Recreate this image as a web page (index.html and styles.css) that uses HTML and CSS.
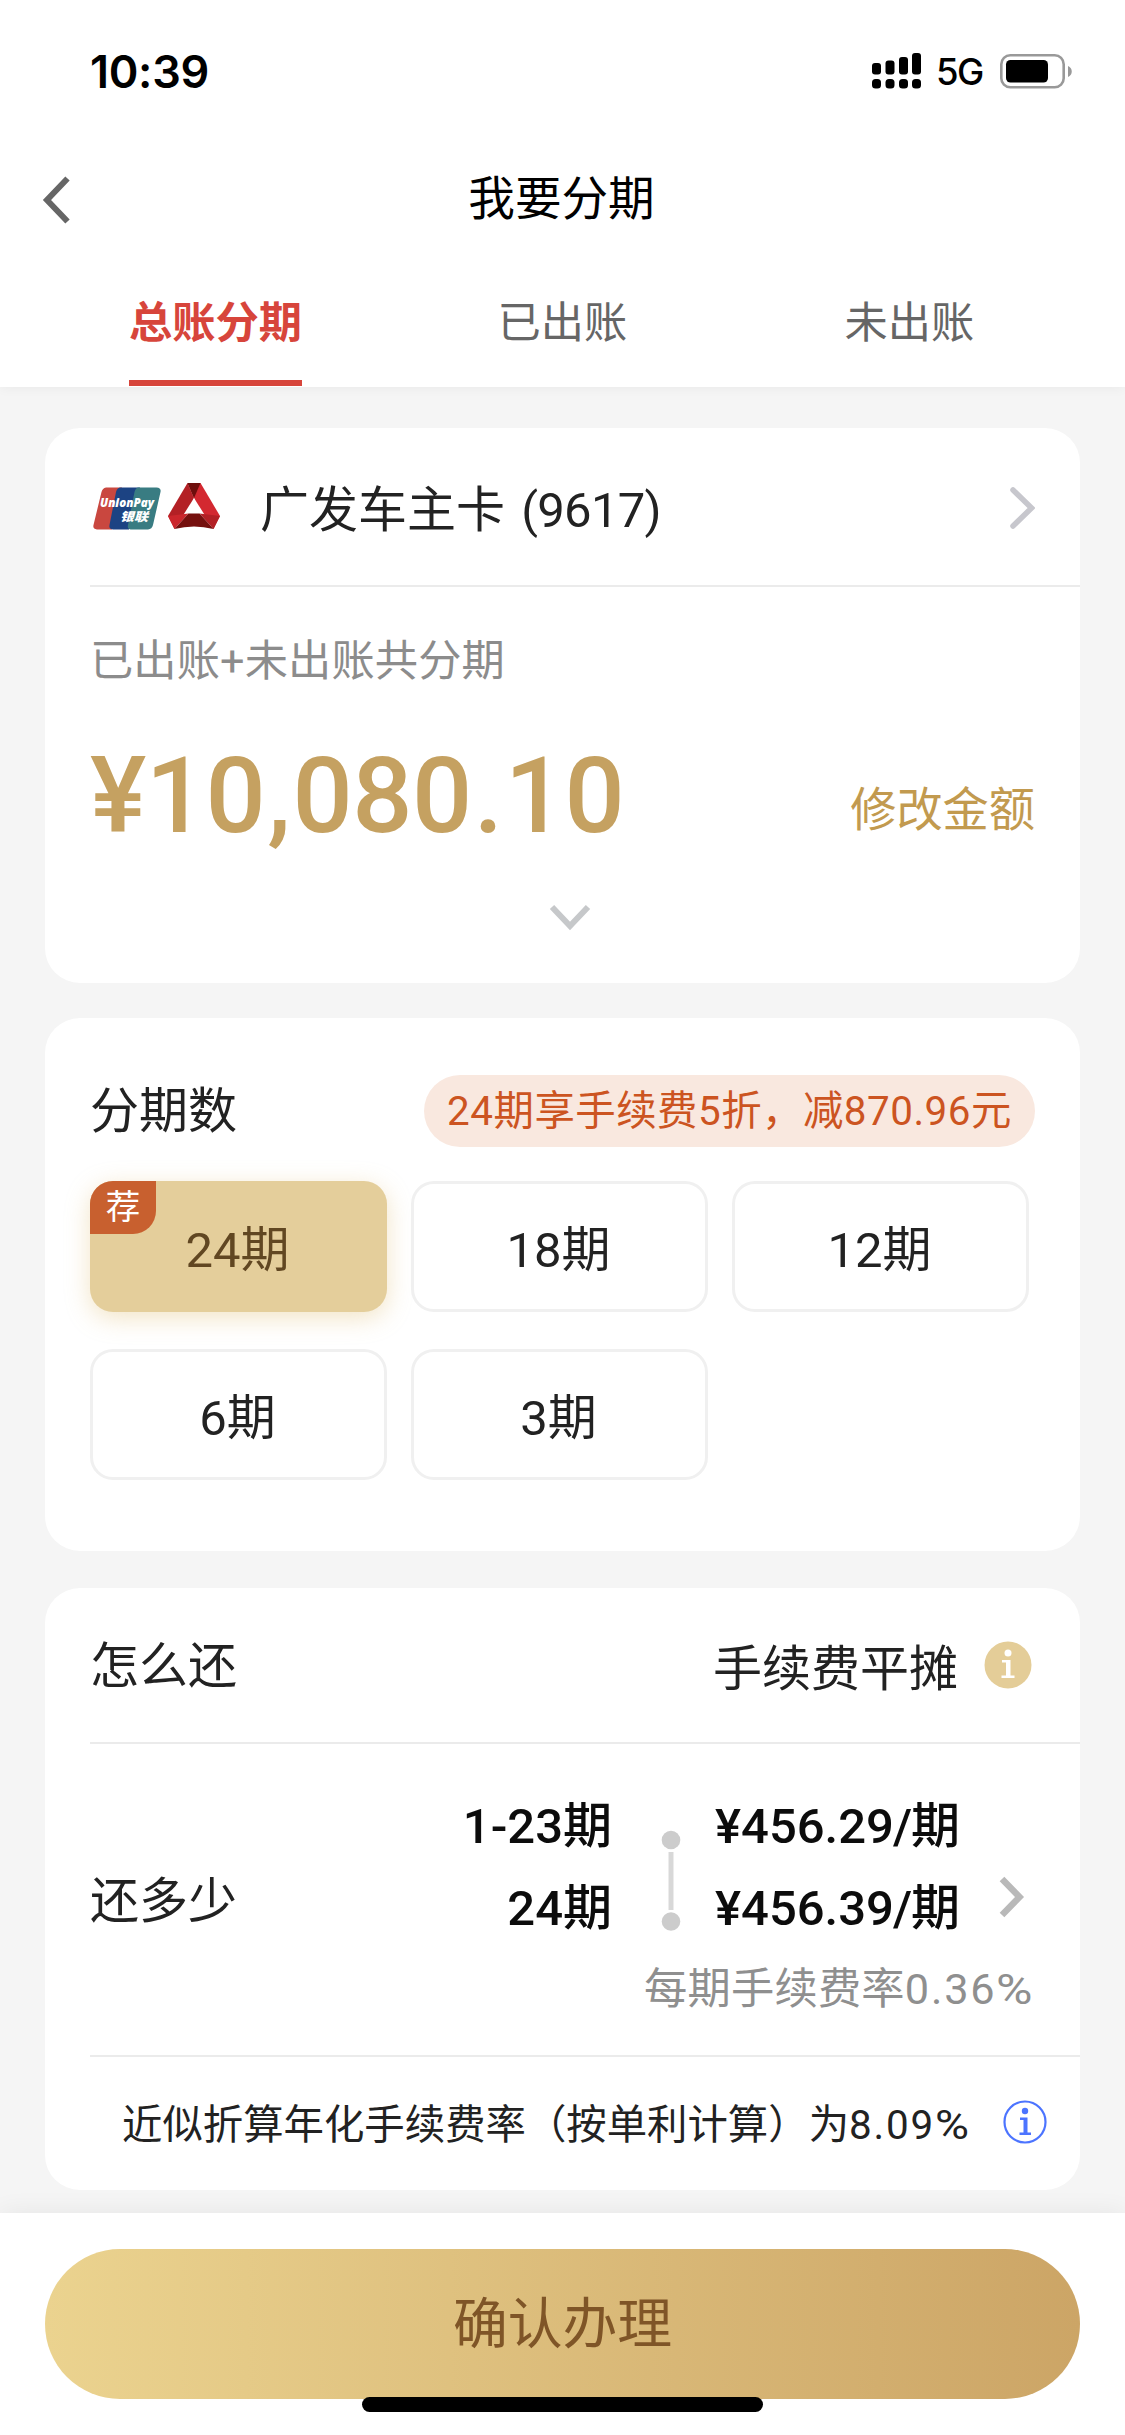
FILE: index.html
```html
<!DOCTYPE html>
<html lang="zh-CN">
<head>
<meta charset="utf-8">
<title>我要分期</title>
<link rel="stylesheet" href="styles.css">
</head>
<body>
<div class="app">
  <header class="header">
    <div class="status">
      <span class="time">10:39</span>
      <div class="status-right">
        <svg class="signal" width="50" height="36" viewBox="0 0 50 36">
          <rect x="0" y="10" width="9" height="11.500" rx="3"/><rect x="13.500" y="7.500" width="9" height="14" rx="3"/><rect x="27" y="4" width="9" height="17.500" rx="3"/><rect x="40" y="0" width="9" height="21.500" rx="3"/>
          <rect x="0" y="26" width="9" height="9.500" rx="3.500"/><rect x="13.500" y="26" width="9" height="9.500" rx="3.500"/><rect x="27" y="26" width="9" height="9.500" rx="3.500"/><rect x="40" y="26" width="9" height="9.500" rx="3.500"/>
        </svg>
        <span class="net">5G</span>
        <svg width="73" height="35" viewBox="0 0 73 35">
          <rect x="1.300" y="1.300" width="62.400" height="32" rx="9" fill="none" stroke="#999" stroke-width="2.600"/>
          <rect x="6" y="6" width="42" height="22.500" rx="4.500" fill="#000"/>
          <path d="M68 12c5 2 5 9 0 11z" fill="#999"/>
        </svg>
      </div>
    </div>
    <div class="nav">
      <svg class="back" width="30" height="50" viewBox="0 0 30 50"><path d="M26.500 3.500 6 25l20.500 21.500" fill="none" stroke="#666" stroke-width="6"/></svg>
      <h1 class="title">我要分期</h1>
    </div>
    <nav class="tabs">
      <span class="tab tab-active">总账分期</span>
      <span class="tab">已出账</span>
      <span class="tab">未出账</span>
    </nav>
  </header>

  <main class="main">
    <section class="card card-account">
      <div class="account">
        <svg class="unionpay" width="68" height="43" viewBox="0 0 68 43">
          <path d="M13 .5h16L19 42.500H4Q-.5 42 .5 38L8.500 5Q9.500 1 13 .5z" fill="#c9473f"/>
          <path d="M27 .5h20L36 42.500H20Q15.500 42 16.500 38L23 5Q24 1 27 .5z" fill="#1c4383"/>
          <path d="M45 .5h18.500Q68.500 1 67.500 5L60 38Q59 42 55 42.500H37.500Q34 42 35 38L41.500 5Q42.500 1 45 .5z" fill="#397c82"/>
          <text x="7" y="20" class="up-en" textLength="54" lengthAdjust="spacingAndGlyphs">UnionPay</text>
          <text x="27" y="33.500" class="up-cn" textLength="28" lengthAdjust="spacingAndGlyphs">银联</text>
        </svg>
        <svg class="brand" width="52" height="46" viewBox="0 0 52 46">
          <path d="M19.500 0h13L52 33l-6.500 13L26 15z" fill="#d32830"/>
          <path d="M19.500 0 26 15 6.500 46 0 33z" fill="#b32025"/>
          <path d="M19.500 0h13L26 15z" fill="#6e0e0c"/>
          <path d="M26 15 20 30h12z" fill="#fff"/>
          <path d="M0 33 20.500 30.500 6.500 46z" fill="#cb262c"/>
          <path d="M52 33 31.500 30.500 45.500 46z" fill="#b32025"/>
          <path d="M20.500 30.500h11L45.500 46Q26 41 6.500 46z" fill="#75100e"/>
        </svg>
        <span class="account-name">广发车主卡 <span class="digits">(9617)</span></span>
        <svg class="go" width="25" height="42" viewBox="0 0 25 42"><path d="M3 3 21.500 21 3 39" fill="none" stroke="#c7c7cd" stroke-width="5.500" stroke-linecap="round"/></svg>
      </div>
      <p class="hint">已出账+未出账共分期</p>
      <div class="amount-row">
        <span class="amount">¥10<span class="comma">,</span>080<span class="dot">.</span>10</span>
        <a class="edit">修改金额</a>
      </div>
      <svg class="expand" width="42" height="28" viewBox="0 0 42 28"><path d="M3 4 21 23 39 4" fill="none" stroke="#c6c8ca" stroke-width="6"/></svg>
    </section>

    <section class="card card-terms">
      <div class="terms-head">
        <h2 class="label">分期数</h2>
        <span class="promo">24期享手续费5折，减870.96元</span>
      </div>
      <div class="terms">
        <div class="term term-on"><span class="badge">荐</span>24期</div>
        <div class="term">18期</div>
        <div class="term">12期</div>
        <div class="term">6期</div>
        <div class="term">3期</div>
      </div>
    </section>

    <section class="card card-plan">
      <div class="row row-how">
        <h2 class="label">怎么还</h2>
        <span class="method">手续费平摊</span>
        <svg width="48" height="48" viewBox="0 0 48 48"><circle cx="24" cy="24" r="23.500" fill="#e4cd98"/><circle cx="24" cy="12" r="3.500" fill="#fff"/><path d="M18 19h8.500v15.500h4v2.500H17.500v-2.500H22V21.500h-4z" fill="#fff"/></svg>
      </div>
      <div class="row row-pay">
        <h2 class="label">还多少</h2>
        <div class="pay">
          <div class="pay-main">
            <div class="periods"><span>1-23期</span><span>24期</span></div>
            <svg class="rail" width="20" height="102" viewBox="0 0 20 102"><circle cx="10" cy="10" r="9.300" fill="#ccc"/><path d="M10 22v58" stroke="#d8d8d8" stroke-width="5"/><circle cx="10" cy="91.500" r="9.300" fill="#ccc"/></svg>
            <div class="sums"><span>¥456.29<i class="slash">/</i>期</span><span>¥456.39<i class="slash">/</i>期</span></div>
            <svg class="pay-go" width="26" height="42" viewBox="0 0 26 42"><path d="M3 3 20.500 21 3 39" fill="none" stroke="#b9b9b9" stroke-width="6.500"/></svg>
          </div>
          <p class="rate">每期手续费率<span class="wide">0.36<span class="pct">%</span></span></p>
        </div>
      </div>
      <div class="annual">
        <span>近似折算年化手续费率（按单利计算）为<span class="wide">8.09<span class="pct">%</span></span></span>
        <svg width="44" height="44" viewBox="0 0 44 44"><circle cx="22" cy="22" r="20.500" fill="none" stroke="#4c74ff" stroke-width="2.200"/><circle cx="22" cy="11" r="3.200" fill="#4c74ff"/><path d="M17 17.500h7.500v15h3.500V35H16.500v-2.500H20.500V20H17z" fill="#4c74ff"/></svg>
      </div>
    </section>
  </main>

  <footer class="footer">
    <button class="confirm">确认办理</button>
    <span class="home-bar"></span>
  </footer>
</div>
</body>
</html>
```
FILE: styles.css
```css
* { box-sizing: border-box; margin: 0; padding: 0; }
body {
  width: 1125px;
  background: #f5f5f5;
  color: #222;
  font-family: Roboto, "Noto Sans CJK SC", sans-serif;
  font-size: 49px;
  line-height: 1;
}
svg { display: block; flex: none; }
h1, h2 { font-weight: 400; }
.app { height: 2435px; display: flex; flex-direction: column; overflow: hidden; }

.header { height: 387px; flex: none; background: #fff; box-shadow: 0 0 12px rgba(0, 0, 0, .06); }
.status {
  height: 142px; padding: 0 52px 0 90px;
  display: flex; align-items: center; justify-content: space-between;
  color: #000; font-family: Inter, sans-serif;
}
.time { font-size: 45px; font-weight: 600; letter-spacing: -.3px; }
.status-right { display: flex; align-items: center; }
.net { width: 48px; margin: 3px 16px 0 14px; font-size: 36.500px; font-weight: 500; letter-spacing: -1.500px; }
.nav { height: 115px; display: flex; align-items: center; padding: 0 41px; }
.back { margin-right: -32px; }
.title { flex: 1; text-align: center; font-size: 46.600px; color: #000; }
.tabs { height: 129px; display: grid; grid-template-columns: repeat(3, 1fr); justify-items: center; padding: 0 42px; }
.tab { height: 129px; padding-top: 45px; text-align: center; white-space: nowrap; font-size: 43.270px; color: #666; }
.tab-active { color: #d7453b; font-weight: 700; border-bottom: 6px solid #d7453b; }

.main { flex: none; height: 1826px; padding: 41px 45px 0; display: flex; flex-direction: column; }
.card { flex: none; background: #fff; border-radius: 35px; padding-left: 45px; }
.card-account { height: 555px; margin-bottom: 35px; display: flex; flex-direction: column; }
.account { height: 159px; border-bottom: 2px solid #ebebeb; display: flex; align-items: center; padding: 3px 45px 0 3px; }
.brand { margin: -4px 0 0 7px; }
.up-en { font: italic 800 13px "Open Sans", sans-serif; fill: #fff; }
.up-cn { font: italic 900 12px "Noto Sans CJK SC", sans-serif; fill: #fff; }
.account-name { margin: 4px 0 0 40px; white-space: nowrap; }
.digits { margin-left: 4px; letter-spacing: -.7px; }
.go { margin-left: auto; }
.hint { margin-top: 53px; font-size: 43.270px; line-height: 44px; color: #8c8c8c; letter-spacing: .1px; }
.amount-row { height: 130px; margin-top: 47px; padding-right: 45px; display: flex; justify-content: space-between; align-items: center; }
.amount { font-size: 106px; font-weight: 500; color: #c5a161; white-space: nowrap; letter-spacing: -.5px; }
.comma, .dot { margin: 0 2px; }
.edit { font-size: 46.200px; color: #c29a4f; margin-top: 29px; }
.expand { margin: 42px 0 0 459px; }

.card-terms { height: 533px; margin-bottom: 37px; }
.terms-head { height: 163px; padding: 57px 45px 0 0; display: flex; justify-content: space-between; align-items: flex-start; }
.label { font-size: 49px; line-height: 72px; }
.card-terms .label { padding-top: 1px; }
.promo { height: 72px; width: 611px; text-align: center; border-radius: 36px; background: #f9e8df; color: #cc5421; font-size: 40.400px; line-height: 73px; letter-spacing: .5px; white-space: nowrap; }
.terms { display: grid; grid-template-columns: repeat(3, 297px); grid-auto-rows: 131px; gap: 36.500px 24px; }
.term { position: relative; display: flex; align-items: center; justify-content: center; border: 3px solid #f0f0f0; border-radius: 23px; padding: 8px 2px 0 0; }
.term-on { border: 0; background: #e4ce9b; color: #614722; box-shadow: 0 6px 24px rgba(222, 184, 104, .38); }
.badge { position: absolute; left: 0; top: 0; width: 66px; height: 53px; border-radius: 23px 0; background: #c8602f; color: #fff; font-size: 34.600px; line-height: 52px; text-align: center; }

.card-plan { height: 602px; }
.row { display: flex; }
.row-how { height: 156px; border-bottom: 2px solid #ebebeb; align-items: center; padding-right: 48px; }
.row-how .label { margin-top: 3px; }
.method { margin: 8px 26px 0 auto; }
.row-pay { height: 313px; border-bottom: 2px solid #ebebeb; justify-content: space-between; }
.row-pay .label { margin-top: 122px; }
.pay { padding: 42px 45px 0 0; display: flex; flex-direction: column; align-items: flex-end; }
.pay-main { display: flex; color: #0c0c0c; font-weight: 500; }
.periods, .sums { display: flex; flex-direction: column; line-height: 81.500px; white-space: nowrap; }
.periods { align-items: flex-end; margin-right: 49px; }
.rail { margin: 44px 34px 0 0; }
.sums { width: 242px; }
.slash { font-style: normal; margin: 0 -1px; }
.pay-go { margin: 90px 10px 0 42px; }
.rate { font-size: 43.270px; line-height: 60px; margin-top: 11px; color: #8f8f8f; letter-spacing: .2px; }
.wide { letter-spacing: 1.800px; }
.pct { display: inline-block; transform: scaleX(1.150); transform-origin: left; margin-right: .160em; letter-spacing: 0; }
.annual { height: 130px; display: flex; justify-content: space-between; align-items: center; padding: 2px 33px 0 32px; font-size: 40.400px; white-space: nowrap; }
.annual > span { margin-top: 7px; }
.annual > svg { margin-top: -2px; }

.footer { position: relative; height: 222px; flex: none; background: #fff; padding: 36px 45px 0; box-shadow: 0 0 24px rgba(0, 0, 0, .07); }
.confirm { display: block; width: 1035px; height: 150px; padding-bottom: 10px; border: 0; border-radius: 75px; background: linear-gradient(90deg, #ebd38f, #cca566); color: #7f5527; font: 54.800px Roboto, "Noto Sans CJK SC", sans-serif; }
.home-bar { position: absolute; left: 362px; top: 184px; width: 401px; height: 15px; border-radius: 8px; background: #000; }
```
